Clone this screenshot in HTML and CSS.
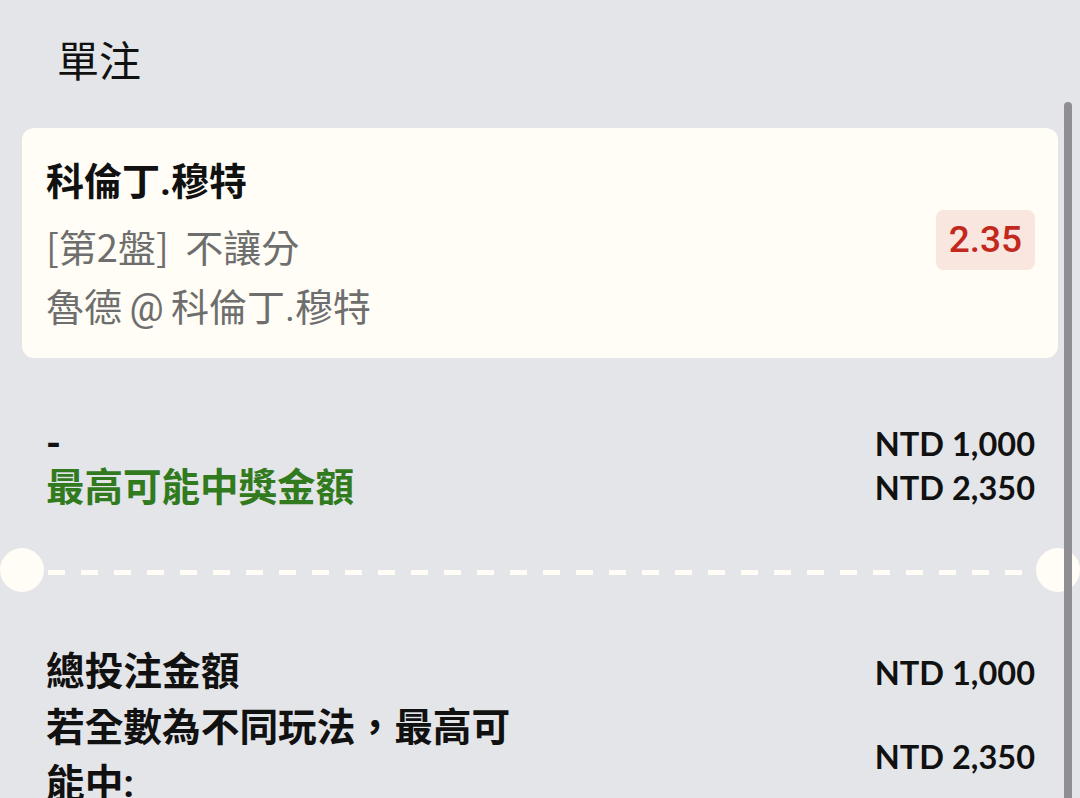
FILE: index.html
```html
<!DOCTYPE html>
<html lang="zh-Hant">
<head>
    <meta charset="UTF-8">
    <meta name="viewport" content="width=device-width, initial-scale=1.0">
    <title>單注</title>
    <link rel="stylesheet" href="styles.css">
</head>
<body>

    <div class="page">
        <h1 class="page-title">單注</h1>

        <div class="bet-card">
            <div class="bet-info">
                <div class="bet-selection">科倫丁.穆特</div>
                <div class="bet-market">[第2盤] 不讓分</div>
                <div class="bet-match">魯德 @ 科倫丁.穆特</div>
            </div>
            <div class="odds-badge">2.35</div>
        </div>

        <div class="summary">
            <div class="summary-row">
                <span class="summary-label">-</span>
                <span class="amount">NTD 1,000</span>
            </div>
            <div class="summary-row">
                <span class="summary-label win">最高可能中獎金額</span>
                <span class="amount">NTD 2,350</span>
            </div>
        </div>

        <div class="ticket-divider">
            <span class="notch"></span>
            <span class="dash-line"></span>
            <span class="notch"></span>
        </div>

        <div class="totals">
            <div class="total-row">
                <span class="total-label">總投注金額</span>
                <span class="amount">NTD 1,000</span>
            </div>
            <div class="total-row">
                <span class="total-label">若全數為不同玩法，最高可能中:</span>
                <span class="amount">NTD 2,350</span>
            </div>
        </div>

        <div class="scroll-thumb"></div>
    </div>

</body>
</html>
```

FILE: styles.css
```css
body {
    margin: 0;
    background-color: #e4e5e8;
    color: #111;
    font-family: Roboto, "Noto Sans CJK TC", sans-serif;
}
.page {
    position: relative;
    height: 798px;
    overflow: hidden;
}
.page-title {
    margin: 0 0 35px;
    padding: 33px 0 0 57px;
    font-size: 42px;
    font-weight: 400;
    line-height: 60px;
}

/* selection card */
.bet-card {
    margin: 0 22px;
    padding: 23px 23px 18px 24px;
    background-color: #fffdf5;
    border-radius: 12px;
    display: flex;
    align-items: center;
    justify-content: space-between;
}
.bet-info {
    font-size: 38px;
    line-height: 63px;
    color: #6e6e6e;
}
.bet-selection {
    color: #111;
    font-weight: 700;
}
.bet-market {
    font-family: "Noto Sans CJK TC", sans-serif;
    word-spacing: 8px;
}
.bet-match {
    word-spacing: -2px;
}
.odds-badge {
    margin-bottom: 12px;
    padding: 0 13px;
    line-height: 60px;
    font-size: 37px;
    font-weight: 500;
    color: #c3281d;
    background-color: #f8e6df;
    border-radius: 8px;
}

/* stake and payout */
.summary {
    margin-top: 64px;
    padding: 0 45px 0 46px;
}
.summary-row {
    display: flex;
    justify-content: space-between;
    line-height: 44px;
}
.summary-label {
    font-size: 38.5px;
    font-weight: 700;
}
.summary-label.win {
    color: #327a1e;
}
.amount {
    font-family: Lato, sans-serif;
    font-size: 32.5px;
    font-weight: 700;
    white-space: nowrap;
}

/* perforated edge */
.ticket-divider {
    margin-top: 38px;
    display: flex;
    align-items: center;
}
.notch {
    width: 44px;
    height: 44px;
    border-radius: 50%;
    background-color: #fffdf5;
    flex-shrink: 0;
}
.dash-line {
    flex: 1;
    height: 5px;
    margin: 4px 4px 0;
    background: repeating-linear-gradient(90deg, #fffdf5 0 17px, transparent 17px 33px);
}

/* totals */
.totals {
    margin-top: 52px;
    padding: 0 45px 0 46px;
}
.total-row {
    display: flex;
    align-items: center;
    justify-content: space-between;
}
.total-label {
    width: 490px;
    font-size: 38.7px;
    font-weight: 700;
    line-height: 56px;
}

.scroll-thumb {
    position: absolute;
    top: 102px;
    right: 8px;
    width: 8px;
    height: 720px;
    border-radius: 4px;
    background-color: #8e8e93;
}
```
